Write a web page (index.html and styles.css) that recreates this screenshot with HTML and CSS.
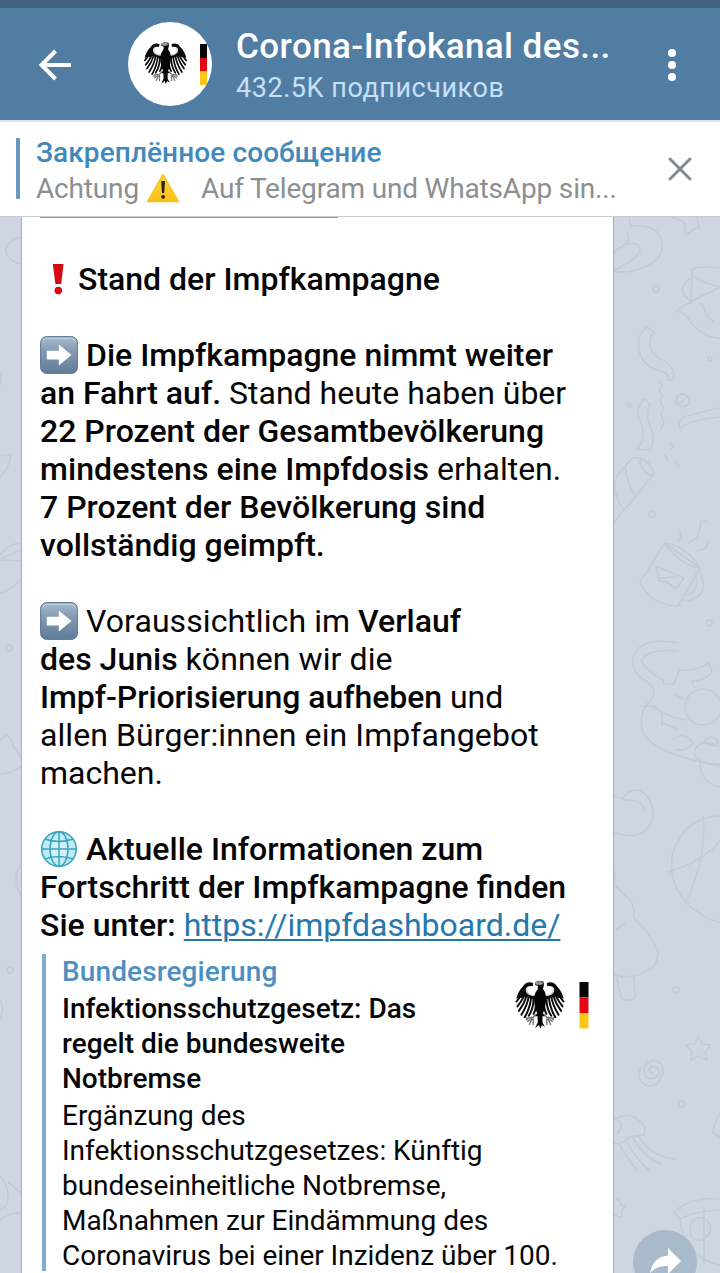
FILE: index.html
```html
<!DOCTYPE html>
<html lang="de">
<head>
<meta charset="utf-8">
<title>Corona-Infokanal</title>
<link rel="stylesheet" href="styles.css">
</head>
<body>
<svg class="defs" aria-hidden="true">
  <defs>
    <linearGradient id="keyGrad" x1="0" y1="0" x2="0" y2="1">
      <stop offset="0" stop-color="#a3b9cd"/><stop offset=".45" stop-color="#8097b0"/><stop offset="1" stop-color="#607c98"/>
    </linearGradient>
    <linearGradient id="warnGrad" x1="0" y1="0" x2="0" y2="1">
      <stop offset="0" stop-color="#ffd83a"/><stop offset="1" stop-color="#f9bf17"/>
    </linearGradient>
    <radialGradient id="globeGrad">
      <stop offset="0" stop-color="#e2f7fb"/><stop offset="1" stop-color="#b4e8f3"/>
    </radialGradient>
    <symbol id="eagle" viewBox="0 0 50 50">
      <g id="wing">
        <path d="M18 3 C14 1.500 10 2.500 8 6 C4 10 2 14 .8 19 L6 18 C8 17 11 17 14 18 L22 21 V16 C15 16.500 10.500 14 10.500 10 C10.500 7 14 5.500 17.500 6.500 Z" fill="#0a0a0a"/>
        <path d="M12 7.500 C10 13 14 17 22 15.500" fill="none" stroke="#ccc" stroke-width="1.300"/>
        <g fill="none" stroke="#0a0a0a" stroke-width="2" stroke-linecap="round">
          <path d="M7 14 Q4 18 1 22"/><path d="M9 16 Q6 22 2 27"/><path d="M11 17 Q9 24 3.500 31.500"/>
          <path d="M13.500 17 Q12 26 6 35.500"/><path d="M16 18 Q15 28 9.500 38"/><path d="M18.500 18 Q18.500 29 13.500 36.500"/>
          <path d="M21 18 Q22 28 18.500 34.500"/>
        </g>
        <path d="M21 35 L18 38 L11 39 M17 39 L12 42.500 M17 39 L14 46 M18 39 L18 46 M13 39 L11 41" fill="none" stroke="#777" stroke-width="1.400"/>
      </g>
      <use href="#wing" transform="translate(50 0) scale(-1 1)"/>
      <path d="M20.500 2 L24 .8 L28.500 1.500 L29 5 L28 9 Q32 14 31 22 Q30 30 28 34 L30 37 L27.500 37 L27.500 43 L30 48 L27 46 L25.500 49.500 L24 46 L20 49 L22.800 43 L22.500 37 L20 37 L22 34 Q19 28 19 21 Q19 13 22.500 10 L23 6 L20 5 Z" fill="#050505"/>
      <path d="M20.500 2 L25 1 L28 2.500 L27.500 4.500 L24 5.200 L20.500 4.500 Z" fill="#999"/>
    </symbol>
    <symbol id="arrowKey" viewBox="0 0 38 38">
      <rect x=".6" y=".6" width="36.800" height="36.800" rx="6" fill="url(#keyGrad)" stroke="#5d7892" stroke-width="1"/>
      <path d="M3 6 Q3 2.500 6.500 2.500 H31.500 Q35 2.500 35 6" fill="none" stroke="#c0d0de" stroke-width="1"/>
      <path d="M6.800 14.800 H18.800 V8.500 L31.500 19 L18.800 29.500 V23.500 H6.800 Z" fill="#fff"/>
    </symbol>
  </defs>
</svg>

<div class="screen">
  <div class="statusbar"></div>
  <header class="header">
    <svg class="back" viewBox="0 0 34 32"><path d="M33 16 H4 M17.500 2 L3.500 16 L17.500 30" fill="none" stroke="#fff" stroke-width="4"/></svg>
    <div class="avatar">
      <svg viewBox="0 0 84 84">
        <use href="#eagle" x="15" y="19.500" width="45" height="43"/>
        <path fill="#050505" d="M72 22h7v14h-7z"/><path fill="#e30613" d="M72 36h7v13.500h-7z"/><path fill="#fcc719" d="M72 49.500h7v13.500h-7z"/>
      </svg>
    </div>
    <div class="heading">
      <div class="title">Corona-Infokanal des...</div>
      <div class="subtitle">432.5K подписчиков</div>
    </div>
    <svg class="menu" viewBox="0 0 10 34"><circle cx="5" cy="5" r="4.100"/><circle cx="5" cy="17" r="4.100"/><circle cx="5" cy="29" r="4.100"/></svg>
  </header>

  <section class="pinned">
    <div class="pinned-bar"></div>
    <div class="pinned-body">
      <div class="pinned-title">Закреплённое сообщение</div>
      <div class="pinned-text"><span>Achtung</span><svg class="warn" viewBox="0 0 34 30"><path d="M17 1.500 L32.500 28.500 H1.500 Z" fill="url(#warnGrad)" stroke="#f8c31c" stroke-width="1.500" stroke-linejoin="round"/><path d="M15.200 8 h3.800 l-.8 12 h-2.200 z" fill="#222"/><circle cx="17.100" cy="23.800" r="1.900" fill="#222"/></svg><span>Auf Telegram und WhatsApp sin...</span></div>
    </div>
    <svg class="close" viewBox="0 0 24 24"><path d="M2 2 L22 22 M22 2 L2 22" fill="none" stroke="#858a8e" stroke-width="3" stroke-linecap="round"/></svg>
  </section>

  <main class="chat">
    <svg class="wallpaper" viewBox="0 217 720 1056">
      <g fill="none" stroke="#c2cbd8" stroke-width="1.700" stroke-linejoin="round" stroke-linecap="round">
        <path d="M629 218 l2 8 q22 -2 29 10 q8 20 -13 30 q-14 7 -33 6 M627 233 q3 6 -1 12 q12 -5 14 5 q-1 8 -25 20 M614 252 l13 -9"/>
        <path d="M672 217 l12 5 l2 13 l8 -6 l5 -1 l-2 -11"/>
        <path d="M720 268 q-22 -3 -28 2 q-3 6 14 13 l14 4 M692 275 l-1 28 M720 287 l-28 14 l-16 10 q10 2 13 9 q14 18 31 18 M690 279 q-15 9 0 22 M700 303 q4 2 6 12 l8 7"/>
        <circle cx="656" cy="289" r="3"/><circle cx="710" cy="359" r="2"/><circle cx="630" cy="405" r="2"/>
        <path d="M647 327 q-14 10 -5 32 q6 9 21 13 q7 3 5 8 h5 q4 -15 -16 -23 q-13 -12 -3 -25 z"/>
        <path d="M658 381 l4 4 l-3 5 l4 6 l-3 5 l4 7 l-3 6 l3 8 l-3 8"/>
        <path d="M684 399 q-2 7 -7 2 q-1 -8 7 -7 q7 4 5 10 q-8 6 -14 -2"/>
        <path d="M645 399 q-12 9 -4 24 q6 18 -5 26 l14 1 q7 -10 -2 -30 q-2 -9 2 -16 z"/>
        <path d="M720 408 q-16 3 -28 7 q-16 2 -12 14 l5 -4 q12 -6 35 -8"/>
        <path d="M615 496 q-2 -14 3 -21 l14 -17 q16 -2 22 15 l-17 22 l-23 27 M625 466 q4 24 10 29 M640 459 q-1 12 13 17 M615 490 q3 15 10 20"/>
        <path d="M670 444 l4 2 l-3 3 M665 455 l3 5 M676 462 l3 5"/>
        <circle cx="652" cy="514" r="3"/><circle cx="709" cy="623" r="3"/>
        <path d="M665 543 l-25 39 q10 23 38 24 l22 -38 z M665 543 q22 3 35 25 M665 543 q16 23 35 25 M700 573 q10 20 -9 27 q-5 1 -8 0 M696 578 q3 14 -9 17"/>
        <path d="M656 566 l28 12 l-8 11 l-9 -7 l-8 -1 z M659 578 l18 -1 M678 541 l3 -5 l-1 -6 M689 543 l9 -6 l3 -16 l5 0 M697 551 l9 -3 l2 -8"/>
        <path d="M678 643 q-35 -7 -44 12 q-5 15 10 25 q15 8 7 20 q-14 12 -8 32 q10 22 77 34 M678 651 q-30 -3 -36 9 q-1 7 21 20 l1 4 h10 l5 -14 q23 1 29 -8 l4 8 q-3 10 -20 11 l3 7 M643 706 q22 -4 19 20 M651 706 l21 11 l14 3 M675 694 l8 5 M664 724 l13 5 M673 739 q12 -8 20 4 q-8 10 -17 6 M695 749 q6 -10 24 -3 M694 752 q1 12 26 12 M700 762 q0 20 20 25"/>
        <circle cx="703" cy="707" r="18"/><path d="M704 742 q5 -9 14 -1 q-2 9 -14 1"/>
        <path d="M614 796 l12 4 q18 0 18 11 M623 798 q5 -8 15 -8 q15 7 15 22 q-1 20 -17 23 q-12 2 -22 -3"/>
        <path d="M720 816 q-37 1 -48 40 q-4 34 24 55 q13 10 24 11 M668 872 q37 -11 52 -32 M703 816 q4 43 -18 88"/>
        <path d="M614 870 q2 8 0 14 l16 16 q6 9 3 17 q20 20 25 35 q-1 14 -7 17 q-9 2 -10 5 q-13 5 -27 1 M616 930 l9 -7 M617 978 l4 20 q7 5 14 0 l-1 -21"/>
        <circle cx="676" cy="990" r="3"/>
        <path d="M698 1036 l4 8 l9 1 l-6 7 l2 8 l-8 -4 l-8 4 l1 -9 l-6 -6 l9 -1 z"/>
        <path d="M652 1073 q-6 -3 0 -7 q8 0 7 8 q-6 8 -13 3 q-6 -10 5 -16 q13 -1 12 12 q-5 15 -16 13 q-12 -7 -6 -18"/>
        <circle cx="682" cy="1104" r="3"/>
        <path d="M614 1120 q14 -10 27 2 q1 3 4 6 l-1 7 l-15 2 q-8 9 -15 6 M620 1145 q8 15 16 24 M627 1143 q9 16 22 27 M633 1138 q12 20 28 26 M639 1137 q13 20 36 22 M615 1119 q11 3 2 15"/>
        <path d="M614 1200 l4 -1 l3 6 l4 1 l-3 5 v7 l-8 -3 M720 1113 q-6 10 -7 20 l7 4"/>
        <path d="M674 1212 l6 7 q15 -8 40 -9 M674 1212 q17 -16 46 -13 M680 1219 q2 24 21 38 q10 7 19 8 M704 1208 v56 M699 1217 q-12 4 -8 19 q10 11 19 -4 q2 -12 -11 -15"/>
        <path d="M22 237 q-17 4 -16 15 q4 11 16 12 M0 373 q2 6 0 12 M0 456 q8 -2 11 -1 q-3 15 -11 22 M22 543 q-14 0 -22 12 M22 550 l-20 8 M0 560 l22 1 M22 578 q-10 12 -22 15"/>
        <circle cx="9" cy="648" r="3"/><circle cx="10" cy="970" r="3"/>
        <path d="M0 740 l7 -5 q6 6 7 13 q7 5 8 14 M0 774 q12 0 22 -8 M22 864 q-12 13 0 33 M0 1000 q5 8 0 18 M0 1176 q12 12 6 30 l-6 4 M22 1194 l-14 -12 M0 1220 q10 -8 22 -7"/>
      </g>
    </svg>

    <article class="bubble">
      <div class="cut-link"></div>
      <p><svg class="excl" viewBox="0 0 38 38"><path d="M12.800 4 h10.700 l-2.300 20 h-5.800 z" fill="#d40b12"/><circle cx="18.300" cy="30.600" r="3.800" fill="#d40b12"/></svg><b>Stand der Impfkampagne</b></p>
      <p><svg class="emoji"><use href="#arrowKey"/></svg><b>Die Impfkampagne nimmt weiter<br>an Fahrt auf.</b> Stand heute haben über<br><b>22 Prozent der Gesamtbevölkerung<br><span class="wide">mindestens eine Impfdosis</span></b> erhalten.<br><b>7 Prozent der Bevölkerung sind<br>vollständig geimpft.</b></p>
      <p><svg class="emoji"><use href="#arrowKey"/></svg><span class="wide">Voraussichtlich im</span> <b>Verlauf<br>des Junis</b> <span class="wide">können wir die</span><br><b class="tight">Impf-Priorisierung aufheben</b> und<br><span class="wide">allen Bürger:innen ein Impfangebot</span><br>machen.</p>
      <p><svg class="emoji" viewBox="0 0 38 38"><circle cx="19" cy="19" r="17.300" fill="url(#globeGrad)"/><g fill="none" stroke="#3ba3bf" stroke-width="1.500"><circle cx="19" cy="19" r="17.300"/><ellipse cx="19" cy="19" rx="9" ry="17.300"/><path d="M19 1.700 V36.300 M1.700 19 H36.300 M5 9 Q19 14 33 9 M5 29 Q19 24 33 29"/></g></svg><b>Aktuelle Informationen zum<br>Fortschritt der Impfkampagne finden<br>Sie unter:</b> <a class="link">https://impfdashboard.de/</a></p>

      <div class="preview">
        <div class="preview-bar"></div>
        <div class="preview-body">
          <div class="site">Bundesregierung</div>
          <div class="preview-title">Infektionsschutzgesetz: Das<br>regelt die bundesweite<br>Notbremse</div>
          <div class="preview-text">Ergänzung des<br>Infektionsschutzgesetzes: Künftig<br>bundeseinheitliche Notbremse,<br>Maßnahmen zur Eindämmung des<br>Coronavirus bei einer Inzidenz über 100.</div>
        </div>
        <svg class="thumb" viewBox="0 0 76 52">
          <use href="#eagle" x="1" y="1" width="50" height="49"/>
          <path fill="#050505" d="M65.500 3h9v15.500h-9z"/><path fill="#e30613" d="M65.500 18.500h9v15.500h-9z"/><path fill="#fcc719" d="M65.500 34h9v15.500h-9z"/>
        </svg>
      </div>
    </article>

    <div class="share">
      <svg viewBox="0 0 64 64"><path d="M35 18 L48 31 L35 44 V36 Q24 35 17 43 Q20 27 35 25.500 Z" fill="#fff"/></svg>
    </div>
  </main>
</div>
</body>
</html>
```

FILE: styles.css
```css
* { box-sizing: border-box; }
body { margin: 0; font-family: Roboto, "Noto Sans", sans-serif; color: #050505; }
svg { display: block; flex: none; }
.defs { position: absolute; width: 0; height: 0; }
.screen { width: 720px; height: 1273px; overflow: hidden; display: flex; flex-direction: column; }

.statusbar { height: 8px; flex: none; background: #426282; }
.header { height: 112px; flex: none; background: #527da3; display: flex; align-items: flex-start; }
.back { width: 34px; height: 32px; margin: 41px 0 0 38px; }
.avatar { width: 84px; height: 84px; margin: 14px 0 0 56px; border-radius: 50%; overflow: hidden; background: #fff; }
.heading { margin: 18px 0 0 24px; width: 420px; white-space: nowrap; }
.title { font-size: 35px; line-height: 42px; font-weight: 500; letter-spacing: .42px; color: #fff; }
.subtitle { font-size: 27px; line-height: 40px; letter-spacing: .55px; color: #c6e0f8; }
.menu { width: 10px; height: 34px; margin: 40px 0 0 11px; fill: #fff; }

.pinned { height: 97px; flex: none; background: #fff; border-top: 2px solid #d9e2ee; border-bottom: 1px solid #c9cdd0; display: flex; z-index: 1; }
.pinned-bar { width: 4px; height: 61px; margin: 16px 0 0 16px; background: #6c96bd; border-radius: 1px; }
.pinned-body { width: 615px; margin: 13px 0 0 16px; white-space: nowrap; }
.pinned-title { font-size: 28px; line-height: 36px; font-weight: 500; letter-spacing: .1px; color: #4189bc; }
.pinned-text { display: flex; font-size: 28px; line-height: 36px; letter-spacing: -.17px; color: #8b8f91; }
.warn { width: 34px; height: 30px; margin: 2px 21px 0 7px; }
.close { width: 24px; height: 24px; margin: 35px 0 0 17px; }

.chat { position: relative; flex: 1; overflow: hidden; background: #ced7e1; }
.wallpaper { position: absolute; inset: 0; width: 720px; height: 1056px; }
.bubble { position: relative; width: 593px; height: 1056px; margin-left: 21px; padding: 0 0 0 18px; background: #fff; border-left: 1px solid #a3afbc; border-right: 1px solid #a3afbc; white-space: nowrap; font-size: 32px; line-height: 38px; }
.cut-link { width: 298px; height: 1px; margin-bottom: 42px; background: #7d9cad; }
.bubble p { margin: 0 0 38px; }
.bubble p:last-of-type { margin-bottom: 9px; }
b { font-weight: 500; }
.wide { letter-spacing: .09px; }
.tight { letter-spacing: -.06px; }
.emoji { display: inline-block; width: 38px; height: 38px; margin-right: 8px; vertical-align: -8px; }
.excl { display: inline-block; width: 38px; height: 38px; vertical-align: -8px; }
.link { color: #2678ad; text-decoration: underline; text-decoration-thickness: 2px; text-underline-offset: 3px; }

.preview { display: flex; font-size: 28px; line-height: 35px; }
.preview-bar { width: 4px; height: 317px; margin: 1px 0 0 2px; background: #7bb0d3; }
.preview-body { width: 452px; margin: 1px 0 0 16px; }
.site { font-weight: 500; letter-spacing: .12px; color: #4d8fc0; height: 37px; }
.preview-title { font-weight: 500; margin-bottom: 2px; }
.preview-text { letter-spacing: -.03px; }
.thumb { width: 76px; height: 52px; margin-top: 26px; }

.share { position: absolute; left: 633px; top: 1013px; width: 64px; height: 64px; border-radius: 50%; background: #a9bacb; }
```
